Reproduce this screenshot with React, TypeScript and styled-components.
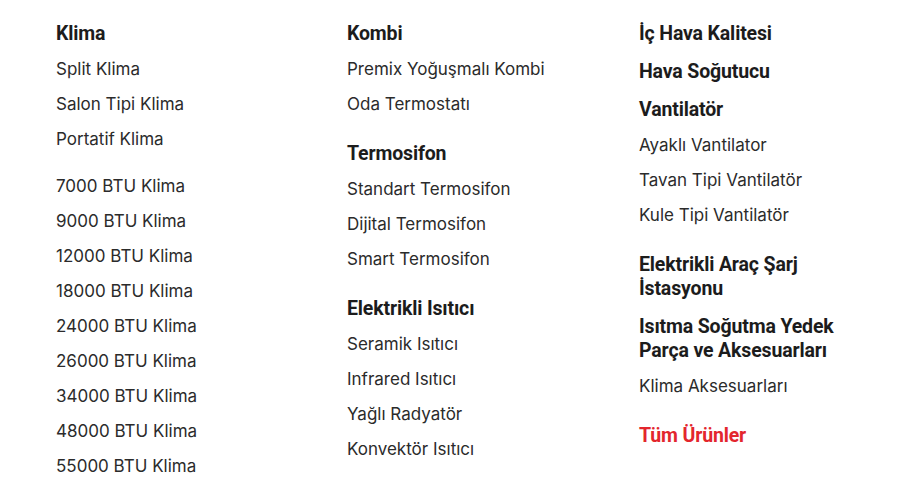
import React from "react";
import styled, { createGlobalStyle } from "styled-components";

const Global = createGlobalStyle`
  html, body { margin: 0; padding: 0; background: #ffffff; overflow: hidden; }
  body { font-family: "Inter", "Noto Sans", sans-serif; color: #1f1f1f; }
`;

const Menu = styled.nav`
  display: grid;
  grid-template-columns: 291px 292px 200px;
  padding: 14px 0 0 56px;
`;

const Column = styled.div`
  display: flex;
  flex-direction: column;
`;

const Group = styled.div`
  display: flex;
  flex-direction: column;
  & + & { margin-top: 12px; }
`;

const Heading = styled.a<{ $accent?: boolean }>`
  display: block;
  padding: 8px 0 6px;
  font-family: "Roboto", "Liberation Sans", sans-serif;
  font-weight: 700;
  font-size: 19.5px;
  line-height: 24px;
  letter-spacing: -0.15px;
  color: ${(p) => (p.$accent ? "#e3262d" : "#1c1c1c")};
  text-decoration: none;
`;

const Item = styled.a`
  display: block;
  font-family: "Inter", "Noto Sans", sans-serif;
  font-size: 17px;
  line-height: 35px;
  color: #2b2b2b;
  text-decoration: none;
  white-space: nowrap;
`;

type GroupData = { headings: string[]; items?: string[]; accent?: boolean };

const columns: GroupData[][] = [
  [
    { headings: ["Klima"], items: ["Split Klima", "Salon Tipi Klima", "Portatif Klima"] },
    {
      headings: [],
      items: [
        "7000 BTU Klima",
        "9000 BTU Klima",
        "12000 BTU Klima",
        "18000 BTU Klima",
        "24000 BTU Klima",
        "26000 BTU Klima",
        "34000 BTU Klima",
        "48000 BTU Klima",
        "55000 BTU Klima",
      ],
    },
  ],
  [
    { headings: ["Kombi"], items: ["Premix Yoğuşmalı Kombi", "Oda Termostatı"] },
    { headings: ["Termosifon"], items: ["Standart Termosifon", "Dijital Termosifon", "Smart Termosifon"] },
    {
      headings: ["Elektrikli Isıtıcı"],
      items: ["Seramik Isıtıcı", "Infrared Isıtıcı", "Yağlı Radyatör", "Konvektör Isıtıcı"],
    },
  ],
  [
    {
      headings: ["İç Hava Kalitesi", "Hava Soğutucu", "Vantilatör"],
      items: ["Ayaklı Vantilator", "Tavan Tipi Vantilatör", "Kule Tipi Vantilatör"],
    },
    {
      headings: ["Elektrikli Araç Şarj İstasyonu", "Isıtma Soğutma Yedek Parça ve Aksesuarları"],
      items: ["Klima Aksesuarları"],
    },
    { headings: ["Tüm Ürünler"], accent: true },
  ],
];

export default function App() {
  return (
    <>
      <Global />
      <Menu>
        {columns.map((col, ci) => (
          <Column key={ci}>
            {col.map((g, gi) => (
              <Group key={gi}>
                {g.headings.map((h) => (
                  <Heading key={h} href="#" $accent={g.accent}>
                    {h}
                  </Heading>
                ))}
                {g.items?.map((it) => (
                  <Item key={it} href="#">
                    {it}
                  </Item>
                ))}
              </Group>
            ))}
          </Column>
        ))}
      </Menu>
    </>
  );
}
